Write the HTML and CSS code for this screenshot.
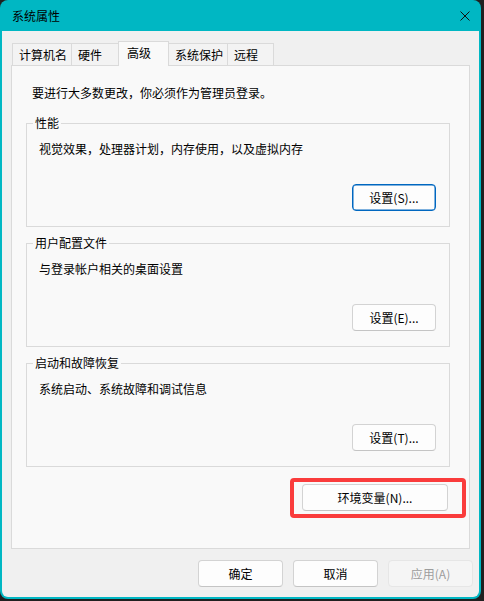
FILE: index.html
```html
<!DOCTYPE html>
<html lang="zh-CN">
<head>
    <meta charset="UTF-8">
    <title>系统属性</title>
    <link rel="stylesheet" href="styles.css">
</head>
<body>
    <div class="window">
        <div class="titlebar">
            <span class="title">系统属性</span>
            <svg class="close" width="10" height="10" viewBox="0 0 10 10">
                <path d="M0.5 0.5 L9.5 9.5 M9.5 0.5 L0.5 9.5" stroke="#111" stroke-width="1" fill="none"/>
            </svg>
        </div>

        <div class="content">
            <div class="tabs">
                <div class="tab tab-name">计算机名</div>
                <div class="tab tab-hw">硬件</div>
                <div class="tab active">高级</div>
                <div class="tab tab-protect">系统保护</div>
                <div class="tab tab-remote">远程</div>
            </div>

            <div class="panel">
                <p class="notice">要进行大多数更改，你必须作为管理员登录。</p>

                <fieldset class="group">
                    <legend>性能</legend>
                    <p>视觉效果，处理器计划，内存使用，以及虚拟内存</p>
                    <div class="group-actions">
                        <button class="btn default">设置(S)...</button>
                    </div>
                </fieldset>

                <fieldset class="group">
                    <legend>用户配置文件</legend>
                    <p>与登录帐户相关的桌面设置</p>
                    <div class="group-actions">
                        <button class="btn">设置(E)...</button>
                    </div>
                </fieldset>

                <fieldset class="group">
                    <legend>启动和故障恢复</legend>
                    <p>系统启动、系统故障和调试信息</p>
                    <div class="group-actions">
                        <button class="btn">设置(T)...</button>
                    </div>
                </fieldset>

                <div class="env-row">
                    <div class="env-wrap">
                        <button class="btn wide">环境变量(N)...</button>
                        <span class="highlight"></span>
                    </div>
                </div>
            </div>

            <div class="footer">
                <button class="btn">确定</button>
                <button class="btn">取消</button>
                <button class="btn" disabled>应用(A)</button>
            </div>
        </div>
    </div>
</body>
</html>
```

FILE: styles.css
```css
* {
    box-sizing: border-box;
}
body {
    margin: 0;
    background-color: #202020;
    font-family: "Noto Sans CJK SC", "Noto Sans", sans-serif;
    font-size: 12px;
    line-height: 16px;
    color: #000;
}
.window {
    width: 481px;
    height: 599px;
    background-color: #00b7c3;
    border-radius: 8px;
    padding: 0 2px 2px 2px;
    display: flex;
    flex-direction: column;
}
.titlebar {
    height: 31px;
    display: flex;
    align-items: center;
    justify-content: space-between;
    padding: 0 9px 0 10px;
}
.close {
    margin-top: 1px;
}
.content {
    flex: 1;
    background-color: #f0f0f0;
    border-radius: 0 0 6px 6px;
    padding: 10px 9px 10px 9px;
    display: flex;
    flex-direction: column;
}
.tabs {
    display: flex;
    align-items: flex-end;
    padding-left: 1px;
    margin-bottom: -1px;
    position: relative;
    z-index: 1;
}
.tab {
    height: 22px;
    flex-shrink: 0;
    white-space: nowrap;
    margin-bottom: 1px;
    padding: 3px 0 0 6px;
    background-color: #f3f3f3;
    border: 1px solid #dadada;
    border-bottom: none;
    margin-right: -1px;
}
.tab-name { width: 60px; }
.tab-hw { width: 50px; }
.tab-protect { width: 61px; padding-left: 7px; }
.tab-remote { width: 47px; }
.tab.active {
    width: 51px;
    height: 25px;
    margin: 0 -2px 0 -2px;
    padding: 3px 0 0 8px;
    background-color: #f9f9f9;
    position: relative;
    z-index: 2;
}
.panel {
    flex: 1;
    background-color: #f9f9f9;
    border: 1px solid #dadada;
    padding: 19px 19px 0 14px;
}
.panel p {
    margin: 0;
}
.notice {
    padding-left: 6px;
}
.group {
    margin: 14px 0 0 0;
    padding: 10px 13px 15px 6px;
    border: 1px solid #dadada;
    min-width: 0;
}
.group + .group {
    margin-top: 8px;
}
.group legend {
    padding: 0 2px;
}
.group p {
    padding-left: 6px;
}
.group-actions {
    display: flex;
    justify-content: flex-end;
    margin-top: 27px;
}
.btn {
    font-family: inherit;
    font-size: 12px;
    line-height: 16px;
    color: #000;
    width: 84px;
    height: 27px;
    padding: 0;
    background-color: #fdfdfd;
    border: 1px solid #d3d3d3;
    border-bottom-color: #c4c4c4;
    border-radius: 4px;
}
.btn.default {
    border: 1px solid #0067c0;
    box-shadow: inset 0 0 0 0.5px #0067c0;
}
.btn.wide {
    width: 146px;
}
.btn:disabled {
    color: #9d9d9d;
    background-color: #f5f5f5;
    border-color: #e6e6e6;
}
.env-row {
    display: flex;
    justify-content: flex-end;
    margin-top: 17px;
    padding-right: 2px;
}
.env-wrap {
    position: relative;
}
.highlight {
    position: absolute;
    left: -12px;
    top: -6px;
    width: 176px;
    height: 40px;
    border: 4px solid #fa3c3c;
    border-radius: 4px;
}
.footer {
    display: flex;
    justify-content: flex-end;
    gap: 10px;
    margin-top: 11px;
    margin-right: -3px;
}
.footer .btn {
    width: 85px;
}
```
